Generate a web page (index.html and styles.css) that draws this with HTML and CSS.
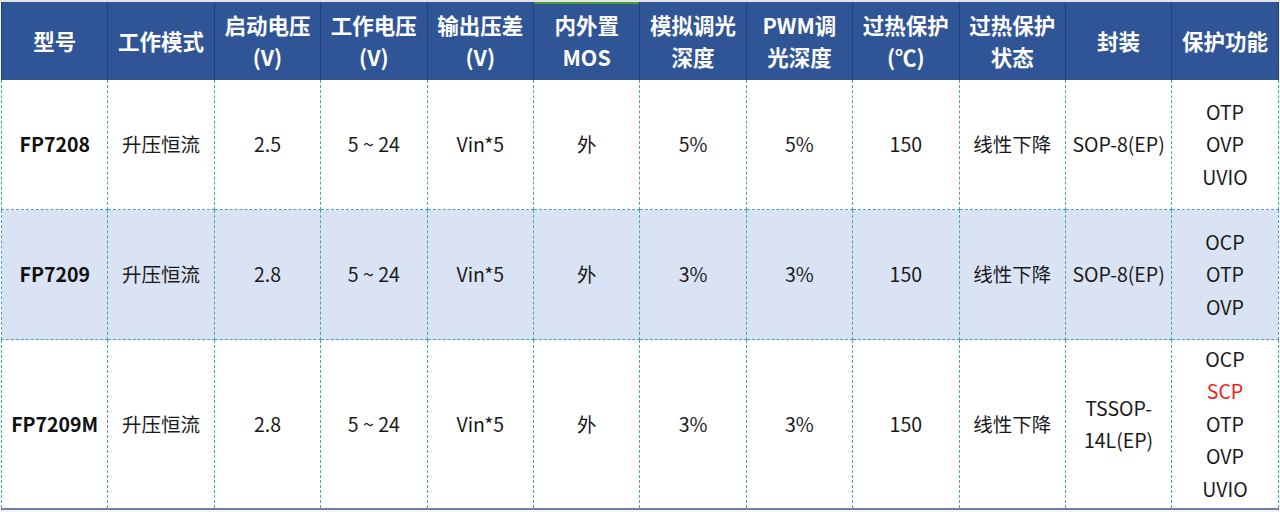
FILE: index.html
```html
<!DOCTYPE html>
<html lang="zh-CN">
<head>
<meta charset="utf-8">
<title>FP7208 系列</title>
<link rel="stylesheet" href="styles.css">
</head>
<body>
<table class="spec">
  <colgroup>
    <col span="12" class="col">
  </colgroup>
  <thead>
    <tr>
      <th>型号</th>
      <th>工作模式</th>
      <th>启动电压<br>(V)</th>
      <th>工作电压<br>(V)</th>
      <th>输出压差<br>(V)</th>
      <th class="mark">内外置<br>MOS</th>
      <th>模拟调光<br>深度</th>
      <th>PWM调<br>光深度</th>
      <th>过热保护<br>(℃)</th>
      <th>过热保护<br>状态</th>
      <th>封装</th>
      <th>保护功能</th>
    </tr>
  </thead>
  <tbody>
    <tr class="r1">
      <td class="model">FP7208</td>
      <td>升压恒流</td>
      <td>2.5</td>
      <td>5 ~ 24</td>
      <td>Vin*5</td>
      <td>外</td>
      <td>5%</td>
      <td>5%</td>
      <td>150</td>
      <td>线性下降</td>
      <td>SOP-8(EP)</td>
      <td class="prot">OTP<br>OVP<br>UVIO</td>
    </tr>
    <tr class="r2 alt">
      <td class="model">FP7209</td>
      <td>升压恒流</td>
      <td>2.8</td>
      <td>5 ~ 24</td>
      <td>Vin*5</td>
      <td>外</td>
      <td>3%</td>
      <td>3%</td>
      <td>150</td>
      <td>线性下降</td>
      <td>SOP-8(EP)</td>
      <td class="prot">OCP<br>OTP<br>OVP</td>
    </tr>
    <tr class="r3">
      <td class="model">FP7209M</td>
      <td>升压恒流</td>
      <td>2.8</td>
      <td>5 ~ 24</td>
      <td>Vin*5</td>
      <td>外</td>
      <td>3%</td>
      <td>3%</td>
      <td>150</td>
      <td>线性下降</td>
      <td>TSSOP-<br>14L(EP)</td>
      <td class="prot">OCP<br><span class="red">SCP</span><br>OTP<br>OVP<br>UVIO</td>
    </tr>
  </tbody>
</table>
</body>
</html>
```

FILE: styles.css
```css
html, body {
  margin: 0;
  padding: 0;
  background: #f4f5f7;
}

body {
  font-family: "Noto Sans CJK SC", "Noto Sans", sans-serif;
  color: #1a1a1a;
}

.spec {
  margin: 0 0 0 1px;
  width: 1277px;
  table-layout: fixed;
  border-collapse: collapse;
  border-top: 2px solid #e2e4e8;
  border-bottom: 2px solid #6f7ea3;
  background: #ffffff;
}

.col {
  width: 106.4px;
}

.spec th {
  height: 78px;
  padding: 0;
  background: #2f5597;
  color: #ffffff;
  font-size: 21.5px;
  font-weight: 700;
  line-height: 32px;
  text-align: center;
  vertical-align: middle;
  border-left: 1px solid #1f3f7a;
  border-right: 1px solid #1f3f7a;
}

.spec th.mark {
  box-shadow: inset 0 2px 0 #4f9a2e;
}

.spec td {
  padding: 0;
  font-size: 19.5px;
  line-height: 32.5px;
  text-align: center;
  vertical-align: middle;
  border: 1px dashed #4aa3b5;
}

.spec thead + tbody tr:first-child td {
  border-top: none;
}

.r1 td { height: 129px; }
.r2 td { height: 129px; }
.r3 td { height: 168px; }

.alt td {
  background: #dae3f3;
}

.model {
  font-weight: 700;
  color: #111111;
}

.red {
  color: #f01c1c;
}
```
